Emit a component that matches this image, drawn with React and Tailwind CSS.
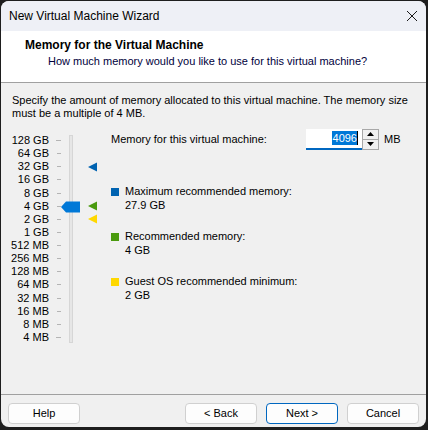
import React from "react";

const labels = [
  "128 GB", "64 GB", "32 GB", "16 GB", "8 GB", "4 GB", "2 GB", "1 GB",
  "512 MB", "256 MB", "128 MB", "64 MB", "32 MB", "16 MB", "8 MB", "4 MB",
];

const Marker = ({ color, top }) => (
  <svg className="absolute left-[76px]" style={{ top }} width="10" height="10" viewBox="0 0 10 10">
    <polygon points="0,5 9,0.5 9,9.5" fill={color} />
  </svg>
);

const Legend = ({ color, title, value }) => (
  <div className="flex items-start">
    <div className={`w-[8px] h-[8px] mt-[3px] ${color}`} />
    <div className="ml-[6px] leading-[13.5px]">
      <div>{title}</div>
      <div>{value}</div>
    </div>
  </div>
);

const Button = ({ children, primary }) => (
  <button
    className={`w-[72px] h-[21px] rounded-[4px] bg-[#fdfdfd] text-[11px] text-black border ${
      primary ? "border-[#0067c0]" : "border-[#d0d0d0]"
    }`}
  >
    {children}
  </button>
);

export default function App() {
  return (
    <div
      className="w-[428px] h-[430px] bg-[#1e1e1e] pl-px pt-px pr-[2px] pb-[3px] text-[11px] text-black"
      style={{ fontFamily: '"Liberation Sans", Arial, sans-serif' }}
    >
      <div className="h-full rounded-[8px] overflow-hidden bg-[#f0f0f0] flex flex-col">
        {/* title bar */}
        <div className="h-[30px] bg-[#eef0f6] flex items-center justify-between pl-[8px] pr-[8px] shrink-0">
          <span className="text-[12px]">New Virtual Machine Wizard</span>
          <svg width="12" height="12" viewBox="0 0 12 12">
            <path d="M1 1 L11 11 M11 1 L1 11" stroke="#1a1a1a" strokeWidth="1" />
          </svg>
        </div>

        {/* header */}
        <div className="h-[51px] bg-white shrink-0 pt-[7px]">
          <div className="pl-[24px] font-bold text-[12px] leading-[14px]">Memory for the Virtual Machine</div>
          <div className="pl-[47px] leading-[16px] mt-[1px] text-[#00003c]">
            How much memory would you like to use for this virtual machine?
          </div>
        </div>
        <div className="border-t border-[#a0a0a0] shrink-0" />

        {/* body */}
        <div className="flex-1 px-[11px] pt-[11px]">
          <p className="leading-[13px]">
            Specify the amount of memory allocated to this virtual machine. The memory size
            must be a multiple of 4 MB.
          </p>

          <div className="flex mt-[14px]">
            {/* slider */}
            <div className="relative w-[95px] h-[212px] shrink-0">
              <div className="flex flex-col items-end w-[37px]">
                {labels.map((l) => (
                  <div key={l} className="h-[13.13px] leading-[13.13px] whitespace-nowrap">
                    {l}
                  </div>
                ))}
              </div>
              {labels.map((l, i) => (
                <div
                  key={"t" + l}
                  className={`absolute h-px bg-[#b4b4b4] ${
                    i === 0 || i === labels.length - 1 ? "left-[44px] w-[5px]" : "left-[45px] w-[4px]"
                  }`}
                  style={{ top: 6 + i * 13.13 }}
                />
              ))}
              <div className="absolute left-[57px] top-[1px] w-[4px] h-[208px] border border-[#d6d6d6] bg-[#e6e6e6]" />
              <svg className="absolute left-[49px] top-[67px]" width="20" height="12" viewBox="0 0 20 12">
                <polygon points="0,6 5,0.5 19,0.5 19,11.5 5,11.5" fill="#0078d7" />
              </svg>
              <Marker color="#0063b1" top={28} />
              <Marker color="#4a9a0e" top={67} />
              <Marker color="#ffd800" top={80} />
            </div>

            {/* right side */}
            <div className="flex-1 pl-[4px]">
              <div className="flex items-center h-[20px] -mt-[5px]">
                <span className="w-[195px]">Memory for this virtual machine:</span>
                <div className="w-[56px] h-[21px] bg-white border-b-2 border-[#0067c0] flex items-center justify-end pr-[4px]">
                  <span className="bg-[#0078d7] text-white leading-[14px] pl-px">4096</span>
                  <span className="w-px h-[14px] bg-black" />
                </div>
                <div className="w-[17px] h-[21px] border border-[#a8a8a8] bg-[#f0f0f0] flex flex-col">
                  <div className="flex-1 flex items-center justify-center border-b border-[#a8a8a8]">
                    <svg width="7" height="4" viewBox="0 0 7 4">
                      <polygon points="3.5,0 7,4 0,4" fill="#000" />
                    </svg>
                  </div>
                  <div className="flex-1 flex items-center justify-center">
                    <svg width="7" height="4" viewBox="0 0 7 4">
                      <polygon points="0,0 7,0 3.5,4" fill="#000" />
                    </svg>
                  </div>
                </div>
                <span className="ml-[5px]">MB</span>
              </div>

              <div className="mt-[36px] flex flex-col gap-[18px]">
                <Legend color="bg-[#0063b1]" title="Maximum recommended memory:" value="27.9 GB" />
                <Legend color="bg-[#4a9a0e]" title="Recommended memory:" value="4 GB" />
                <Legend color="bg-[#ffd800]" title="Guest OS recommended minimum:" value="2 GB" />
              </div>
            </div>
          </div>
        </div>

        {/* footer */}
        <div className="border-t border-[#a0a0a0] shrink-0" />
        <div className="h-[32px] shrink-0 flex items-start pt-[8px] px-[7px]">
          <Button>Help</Button>
          <div className="flex-1" />
          <div className="flex gap-[9px]">
            <Button>&lt; Back</Button>
            <Button primary>Next &gt;</Button>
            <Button>Cancel</Button>
          </div>
        </div>
      </div>
    </div>
  );
}
